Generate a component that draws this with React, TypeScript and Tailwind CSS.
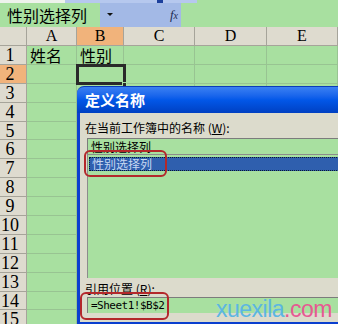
import React from "react";

const cols = [
  { name: "A", w: "w-[50px]" },
  { name: "B", w: "w-[47px]" },
  { name: "C", w: "w-[71px]" },
  { name: "D", w: "w-[72px]" },
  { name: "E", w: "w-[71px]" },
];

const rows = Array.from({ length: 15 }, (_, i) => i + 1);

const cellText: Record<string, string> = {
  "1A": "姓名",
  "1B": "性别",
};

export default function App() {
  return (
    <div className="relative w-[338px] h-[324px] overflow-hidden bg-[#a8e0a0] font-['Noto_Sans_CJK_SC',sans-serif] text-black">
      {/* top strip */}
      <div className="h-[3px] flex">
        <div className="w-[65px] bg-[#eef3ec]" />
        <div className="w-[92px] bg-[#b6c8ee]" />
        <div className="w-[6px] bg-[#1c3f9c]" />
        <div className="w-[34px] bg-[#b6c8ee]" />
        <div className="flex-1 bg-[#a8e0a0]" />
      </div>

      {/* formula bar */}
      <div className="h-[24px] flex">
        <div className="w-[100px] bg-[#a8e0a0] pl-[7px] text-[16px] leading-[24px]">性别选择列</div>
        <div className="w-[81px] bg-[#a3b9e6] flex items-center">
          <svg width="16" height="6" viewBox="0 0 16 6" className="ml-[5px]">
            <path d="M2 1h6l-3 3z" fill="#111" />
          </svg>
          <span className="ml-auto mr-[3px] font-['Liberation_Serif',serif] italic text-[13px] text-[#1d2a52]">
            f<span className="text-[10px]">x</span>
          </span>
        </div>
        <div className="flex-1 bg-[#a8e0a0]" />
      </div>

      {/* column headers */}
      <div className="h-[19px] flex font-['Liberation_Serif',serif] text-[16px] leading-[18px]">
        <div className="w-[27px] bg-[#dedbcf] border-r border-b border-[#a6a49a]" />
        {cols.map((c) => (
          <div
            key={c.name}
            className={`${c.w} text-center border-r border-b border-[#a6a49a] ${
              c.name === "B" ? "bg-[#f1b37b]" : "bg-[#dedbcf]"
            }`}
          >
            {c.name}
          </div>
        ))}
      </div>

      {/* rows */}
      {rows.map((r) => (
        <div key={r} className="h-[18.9px] flex">
          <div
            className={`w-[27px] border-r border-b border-[#a6a49a] font-['Liberation_Serif',serif] text-[18px] leading-[18px] ${
              r === 2 ? "bg-[#f1b37b]" : "bg-[#dedbcf]"
            }`}
          >
            <div className="w-[20px] text-center">{r}</div>
          </div>
          {cols.map((c) => (
            <div
              key={c.name}
              className={`${c.w} border-r border-b border-[#98c492] pl-[3px] text-[16px] leading-[18px] whitespace-nowrap`}
            >
              {cellText[`${r}${c.name}`] ?? ""}
            </div>
          ))}
        </div>
      ))}

      {/* active cell B2 */}
      <div className="absolute left-[76px] top-[64px] w-[50px] h-[21px] border-[3px] border-[#2a2a2a]" />
      <div className="absolute left-[122px] top-[82px] w-[5px] h-[5px] bg-[#2a2a2a] border border-[#a8e0a0]" />

      {/* define name dialog */}
      <div className="absolute left-[77px] top-[86px] w-[290px] h-[240px] flex flex-col">
        <div className="h-[27px] rounded-tl-[7px] bg-linear-to-b from-[#3a80f2] via-[#0257e8] to-[#0040c2] border-t border-[#0a3cb8] pl-[8px] flex items-center text-white font-bold text-[15px]">
          定义名称
        </div>
        <div className="flex-1 flex flex-col border-l-[3px] border-b-[4px] border-[#0a3fcf] bg-[#dcdbcc] pl-[5px]">
          <div className="pt-[8px] text-[12px] leading-[14px] whitespace-nowrap">
            在当前工作簿中的名称 (<span className="underline">W</span>):
          </div>
          <div className="mt-[3px] ml-[2px] h-[16px] border-t border-l border-[#7c7c7c] bg-[#a8e0a0] pl-[3px] text-[12px] leading-[15px]">
            性别选择列
          </div>
          <div className="ml-[2px] h-[124px] border-t border-l border-[#8c8c8c] bg-[#a8e0a0] pt-[2px]">
            <div className="ml-[1px] h-[14px] bg-[#2f5fae] border border-dotted border-[#0c1a30] pl-[2px] text-[12px] leading-[12px] text-[#c6d8f2]">
              性别选择列
            </div>
          </div>
          <div className="pt-[4px] h-[19px] text-[12px] leading-[14px] whitespace-nowrap">
            引用位置 (<span className="underline">R</span>):
          </div>
          <div className="ml-[2px] h-[16px] border-t border-l border-[#7c7c7c] bg-[#a8e0a0] pl-[3px] font-['DejaVu_Sans_Mono',monospace] text-[11px] tracking-[-0.5px] leading-[16px]">
            =Sheet1!$B$2
          </div>
          <div className="flex-1" />
        </div>
      </div>

      {/* annotation boxes */}
      <div className="absolute left-[84px] top-[150px] w-[83px] h-[27px] rounded-[6px] border-[2.5px] border-[#b3282b]" />
      <div className="absolute left-[80px] top-[292px] w-[89px] h-[28px] rounded-[6px] border-[2.5px] border-[#b3282b]" />

      {/* watermark */}
      <div className="absolute left-[216px] top-[296px] font-['Liberation_Sans',sans-serif] text-[23px] tracking-[-0.5px] leading-[26px] whitespace-nowrap">
        <span className="text-[#5cb6e2]">xuexila</span>
        <span className="text-[#e65a92]">.com</span>
      </div>
    </div>
  );
}
